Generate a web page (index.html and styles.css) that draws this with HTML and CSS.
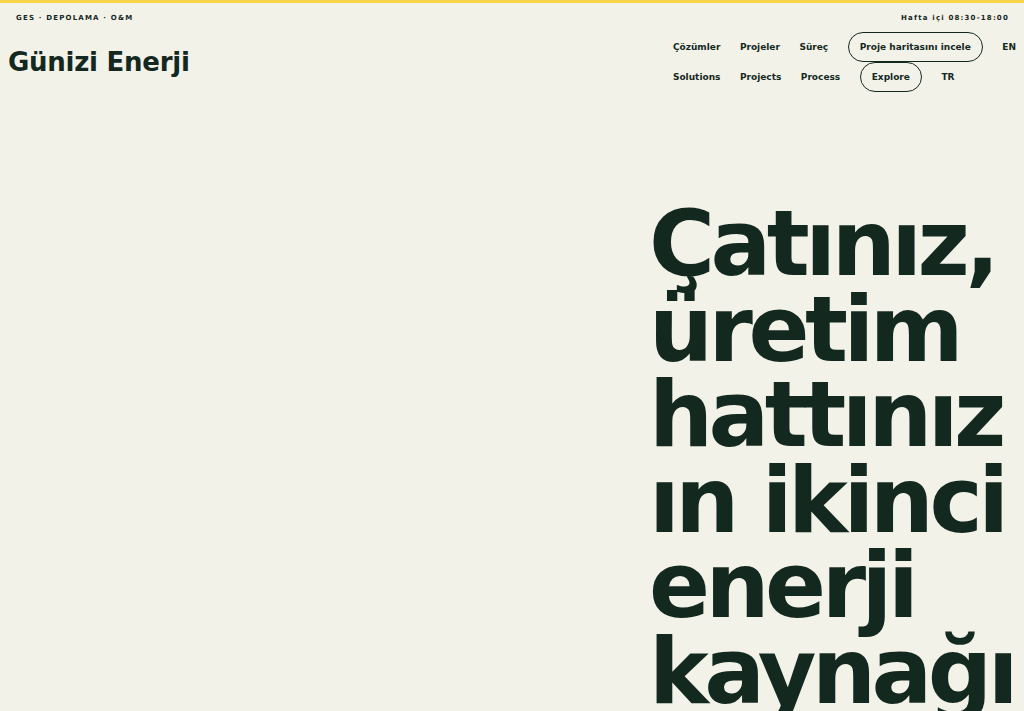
FILE: index.html
```html
<!DOCTYPE html>
<html lang="tr">
<head>
<meta charset="utf-8">
<title>Günizi Enerji</title>
<link rel="stylesheet" href="styles.css">
</head>
<body>
<div class="topbar">
  <span class="topbar-item">GES · DEPOLAMA · O&amp;M</span>
  <span class="topbar-item">Hafta içi 08:30-18:00</span>
</div>
<header class="header">
  <a class="logo" href="#">Günizi Enerji</a>
  <nav class="nav">
    <ul class="nav-row">
      <li><a class="nav-link" href="#">Çözümler</a></li>
      <li><a class="nav-link" href="#">Projeler</a></li>
      <li><a class="nav-link" href="#">Süreç</a></li>
      <li><a class="nav-link nav-pill" href="#">Proje haritasını incele</a></li>
      <li><a class="nav-link" href="#">EN</a></li>
    </ul>
    <ul class="nav-row">
      <li><a class="nav-link" href="#">Solutions</a></li>
      <li><a class="nav-link" href="#">Projects</a></li>
      <li><a class="nav-link" href="#">Process</a></li>
      <li><a class="nav-link nav-pill" href="#">Explore</a></li>
      <li><a class="nav-link" href="#">TR</a></li>
    </ul>
  </nav>
</header>
<main class="hero">
  <div class="hero-media"></div>
  <h1 class="hero-title">Çatınız, üretim hattınızın ikinci enerji kaynağı</h1>
</main>
</body>
</html>
```

FILE: styles.css
```css
html, body {
  margin: 0;
  padding: 0;
}

body {
  background: #f3f2e8;
  color: #13281f;
  font-family: "DejaVu Sans", "Noto Sans", sans-serif;
  border-top: 3px solid #f7d448;
  overflow: hidden;
}

a {
  color: inherit;
  text-decoration: none;
}

.topbar {
  display: flex;
  justify-content: space-between;
  align-items: center;
  padding: 10px 15px 0 16px;
  height: 10px;
}

.topbar-item {
  font-size: 7px;
  line-height: 10px;
  font-weight: 700;
  letter-spacing: 0.17em;
  text-transform: uppercase;
}

.topbar-item:last-child {
  text-transform: none;
}

.header {
  display: flex;
  justify-content: space-between;
  align-items: center;
  padding: 9px 8px 0 8px;
}

.logo {
  font-size: 26px;
  font-weight: 700;
  letter-spacing: -0.01em;
  line-height: 32px;
}

.nav {
  display: flex;
  flex-direction: column;
  align-items: flex-start;
}

.nav-row {
  display: flex;
  align-items: center;
  gap: 19.5px;
  list-style: none;
  margin: 0;
  padding: 0;
  height: 30px;
}

.nav-link {
  display: block;
  font-size: 9px;
  font-weight: 700;
  line-height: 30px;
}

.nav-pill {
  border: 1px solid #13281f;
  border-radius: 999px;
  line-height: 28px;
  padding: 0 11px;
}

.hero {
  display: grid;
  grid-template-columns: 1fr 375px;
  padding: 109px 0 0 8px;
}

.hero-title {
  margin: 0;
  font-size: 90px;
  font-weight: 700;
  line-height: 0.95;
  letter-spacing: -0.05em;
  overflow-wrap: break-word;
}
```
